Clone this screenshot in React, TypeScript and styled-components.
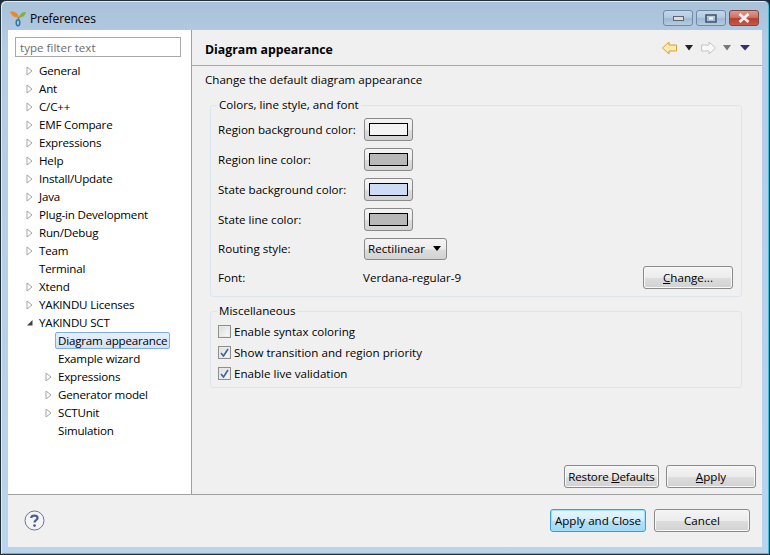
import React, { FC } from "react";
import styled, { createGlobalStyle } from "styled-components";

const GlobalStyle = createGlobalStyle`
  html, body { margin: 0; padding: 0; background: #1d2a38; }
  body { font-family: "Open Sans", "Noto Sans", sans-serif; font-size: 11.6px; color: #000; }
`;

const Win = styled.div`
  width: 770px;
  height: 555px;
  box-sizing: border-box;
  border: 1px solid #22303c;
  border-radius: 6px 6px 0 0;
  background: linear-gradient(180deg, #a8c0d8 0%, #b4cde4 8%, #bad4ec 100%);
  box-shadow: inset 1px 1px 0 #dcebf7, inset -1px -1px 0 #35c4e6;
  display: flex;
  flex-direction: column;
  overflow: hidden;
`;

const TitleBar = styled.div`
  height: 29px;
  flex: none;
  display: flex;
  align-items: center;
  padding: 5px 10px 0 9px;
  box-sizing: border-box;
`;

const TitleText = styled.span`
  margin-left: 3px;
  flex: 1;
  font-size: 12px;
  letter-spacing: -0.1px;
`;

const WinControls = styled.div`
  display: flex;
  gap: 3px;
`;

const WinBtn = styled.div<{ $close?: boolean }>`
  width: 30px;
  height: 16px;
  box-sizing: border-box;
  border: 1px solid ${(p) => (p.$close ? "#7c4a46" : "#6f8aa6")};
  border-radius: 3px;
  display: flex;
  align-items: center;
  justify-content: center;
  background: ${(p) =>
    p.$close
      ? "linear-gradient(180deg,#dc9a8f 0%,#cf7365 45%,#b93e2f 55%,#c9584a 100%)"
      : "linear-gradient(180deg,#c4d7e8 0%,#b4cbe0 45%,#9fb9d2 55%,#b4cde2 100%)"};
`;

const Client = styled.div`
  flex: 1;
  margin: 0 7px 7px 7px;
  display: flex;
  flex-direction: column;
  background: #f0f0f0;
  min-height: 0;
`;

const Main = styled.div`
  flex: 1;
  display: flex;
  min-height: 0;
  border-bottom: 1px solid #a0a0a0;
`;

const Side = styled.aside`
  flex: none;
  width: 166px;
  background: #fff;
  border-right: 1px solid #a0a0a0;
  padding: 7px 10px 0 7px;
`;

const Filter = styled.input`
  display: block;
  width: 166px;
  height: 20px;
  box-sizing: border-box;
  border: 1px solid #a9a9a9;
  padding: 0 4px;
  margin: 0 0 4px 0;
  font: inherit;
  outline: none;
  &::placeholder { color: #6d6d6d; opacity: 1; }
`;

const Tree = styled.ul`
  list-style: none;
  margin: 0;
  padding: 0;
  letter-spacing: -0.2px;
`;

const Row = styled.li<{ $depth: number }>`
  height: 18px;
  display: flex;
  align-items: center;
  padding-left: ${(p) => 13 + p.$depth * 19}px;
  white-space: nowrap;
`;

const Arrow = styled.svg`
  width: 7px;
  height: 10px;
  flex: none;
  margin-left: -2px;
  margin-right: 6px;
  margin-top: 2px;
`;

const NoArrow = styled.span`
  width: 7px;
  flex: none;
  margin-left: -2px;
  margin-right: 6px;
`;

const Label = styled.span<{ $sel?: boolean }>`
  ${(p) =>
    p.$sel
      ? `margin: 0 0 0 -3px; padding: 0 2px; height: 17px; line-height: 15px; box-sizing: border-box;
         border: 1px solid #84acdd; border-radius: 2px;
         background: linear-gradient(180deg,#e6f0fb,#cfe2f8);`
      : ""}
`;

const Content = styled.main`
  flex: 1;
  display: flex;
  flex-direction: column;
  min-width: 0;
`;

const PageHead = styled.header`
  height: 36px;
  flex: none;
  box-sizing: border-box;
  border-bottom: 1px solid #a8a8a8;
  display: flex;
  align-items: center;
  padding: 4px 12px 0 13px;
`;

const PageTitle = styled.h1`
  flex: 1;
  margin: 0;
  font-size: 12.3px;
  font-weight: 700;
`;

const NavIcons = styled.div`
  display: flex;
  align-items: center;
  margin-top: -3px;
`;

const Body = styled.div`
  flex: 1;
  display: flex;
  flex-direction: column;
  padding: 5px 6px 6px 13px;
`;

const Desc = styled.p`
  margin: 0 0 11px 0;
  line-height: 17px;
`;

const Group = styled.fieldset<{ $h: number }>`
  margin: 0 14px 8px 5px;
  padding: 0;
  height: ${(p) => p.$h}px;
  box-sizing: border-box;
  border: 1px solid #dbe5ef;
  border-radius: 3px;
  flex: none;
`;

const Legend = styled.legend`
  margin-left: 6px;
  padding: 0 2px;
  line-height: 12px;
  height: 12px;
`;

const FieldGrid = styled.div`
  padding: 3px 8px 0 7px;
  display: grid;
  grid-template-columns: 146px 1fr auto;
  grid-template-rows: repeat(4, 30px) 29px 29px;
  align-items: center;
`;

const FontName = styled.span`
  margin-left: -1px;
`;

const ColorButton = styled.div`
  width: 49px;
  height: 23px;
  box-sizing: border-box;
  border: 1px solid #8a8a8a;
  border-radius: 3px;
  background: linear-gradient(180deg, #f4f4f4 0%, #ececec 50%, #dcdcdc 55%, #d2d2d2 100%);
  display: flex;
  align-items: center;
  justify-content: center;
`;

const Swatch = styled.div<{ $c: string }>`
  width: 39px;
  height: 13px;
  box-sizing: border-box;
  border: 1px solid #000;
  background: ${(p) => p.$c};
`;

const Select = styled.div`
  width: 83px;
  height: 22px;
  box-sizing: border-box;
  border: 1px solid #8a8a8a;
  border-radius: 3px;
  background: linear-gradient(180deg, #f4f4f4 0%, #ececec 50%, #dcdcdc 55%, #d2d2d2 100%);
  display: flex;
  align-items: center;
  justify-content: space-between;
  padding: 0 5px 0 3px;
`;

const Caret = styled.span`
  width: 0;
  height: 0;
  border-left: 4px solid transparent;
  border-right: 4px solid transparent;
  border-top: 5px solid #000;
`;

const Button = styled.button<{ $w: number; $def?: boolean }>`
  width: ${(p) => p.$w}px;
  height: 23px;
  box-sizing: border-box;
  padding: 0;
  font: inherit;
  color: #000;
  border: 1px solid ${(p) => (p.$def ? "#3c9ed0" : "#8a8a8a")};
  border-radius: 3px;
  background: ${(p) =>
    p.$def
      ? "linear-gradient(180deg,#e9f6fd 0%,#d4eefb 50%,#b4e0f7 55%,#a4d8f5 100%)"
      : "linear-gradient(180deg,#f4f4f4 0%,#ececec 50%,#dcdcdc 55%,#d2d2d2 100%)"};
  box-shadow: inset 0 0 0 1px ${(p) => (p.$def ? "#9fe0fb" : "#f8f8f8")};
`;

const Checks = styled.div`
  padding: 4px 7px 0;
  display: flex;
  flex-direction: column;
`;

const CheckRow = styled.label`
  height: 21px;
  display: flex;
  align-items: center;
  gap: 3px;
`;

const Box = styled.span`
  width: 13px;
  height: 13px;
  flex: none;
  box-sizing: border-box;
  border: 1px solid #8e8e8e;
  background: linear-gradient(135deg, #dcdcdc, #fbfbfb);
  box-shadow: inset 0 0 0 1px #e9e9e9;
  display: flex;
  align-items: center;
  justify-content: center;
`;

const PageActions = styled.div`
  margin-top: auto;
  display: flex;
  justify-content: flex-end;
  gap: 7px;
`;

const RestoreText = styled.span`
  letter-spacing: -0.2px;
`;

const Footer = styled.footer`
  height: 52px;
  flex: none;
  box-sizing: border-box;
  display: flex;
  align-items: center;
  padding: 0 12px 2px 16px;
`;

const FooterBtns = styled.div`
  margin-left: auto;
  display: flex;
  gap: 8px;
`;

const U = styled.span`
  text-decoration: underline;
`;

const Closed = () => (
  <Arrow viewBox="0 0 7 10">
    <path d="M1 1 L6 5 L1 9 Z" fill="#fff" stroke="#a6a6a6" />
  </Arrow>
);

const Opened = () => (
  <Arrow viewBox="0 0 7 10">
    <path d="M6.5 2 V7.5 H1 Z" fill="#404040" />
  </Arrow>
);

type Item = { label: string; depth: number; kind: "closed" | "open" | "leaf"; sel?: boolean };

const items: Item[] = [
  { label: "General", depth: 0, kind: "closed" },
  { label: "Ant", depth: 0, kind: "closed" },
  { label: "C/C++", depth: 0, kind: "closed" },
  { label: "EMF Compare", depth: 0, kind: "closed" },
  { label: "Expressions", depth: 0, kind: "closed" },
  { label: "Help", depth: 0, kind: "closed" },
  { label: "Install/Update", depth: 0, kind: "closed" },
  { label: "Java", depth: 0, kind: "closed" },
  { label: "Plug-in Development", depth: 0, kind: "closed" },
  { label: "Run/Debug", depth: 0, kind: "closed" },
  { label: "Team", depth: 0, kind: "closed" },
  { label: "Terminal", depth: 0, kind: "leaf" },
  { label: "Xtend", depth: 0, kind: "closed" },
  { label: "YAKINDU Licenses", depth: 0, kind: "closed" },
  { label: "YAKINDU SCT", depth: 0, kind: "open" },
  { label: "Diagram appearance", depth: 1, kind: "leaf", sel: true },
  { label: "Example wizard", depth: 1, kind: "leaf" },
  { label: "Expressions", depth: 1, kind: "closed" },
  { label: "Generator model", depth: 1, kind: "closed" },
  { label: "SCTUnit", depth: 1, kind: "closed" },
  { label: "Simulation", depth: 1, kind: "leaf" },
];

const Logo = () => (
  <svg width="17" height="17" viewBox="0 0 17 17">
    <path d="M0 2 C4 0.5 8 3 9 7.5 C5 8 2 6 0 2 Z" fill="#e88a2a" />
    <path d="M16 2 C13 1.5 9.5 3.5 9 7.5 C12 8 15 6 16 2 Z" fill="#84b040" />
    <path d="M8.6 7 V10" stroke="#6a8a7a" strokeWidth="1.4" />
    <ellipse cx="8" cy="12.8" rx="1.8" ry="3" fill="none" stroke="#2d78a8" strokeWidth="1.5" />
  </svg>
);

const NavArrow: FC<{ dir: "l" | "r"; on: boolean; left: number }> = ({ dir, on, left }) => (
  <svg width="15" height="14" viewBox="0 0 15 14" style={{ marginLeft: left }}>
    <path
      d={dir === "l" ? "M7 1 L0.5 7 L7 13 V10 H14.5 V4 H7 Z" : "M8 1 L14.5 7 L8 13 V10 H0.5 V4 H8 Z"}
      fill={on ? "#ffeab0" : "#f8f8f8"}
      stroke={on ? "#d9a032" : "#c4c4c4"}
      strokeLinejoin="round"
    />
  </svg>
);

const NavCaret: FC<{ color: string; left: number; w: number }> = ({ color, left, w }) => (
  <svg width={w} height="6" viewBox={`0 0 ${w} 6`} style={{ marginLeft: left }}>
    <path d={`M0 0 H${w} L${w / 2} 5.5 Z`} fill={color} />
  </svg>
);

const Check = () => (
  <svg width="9" height="9" viewBox="0 0 9 9">
    <path d="M1 5 L3.5 8 L8 1" fill="none" stroke="#3f5fa8" strokeWidth="1.6" />
  </svg>
);

const Help = () => (
  <svg width="21" height="21" viewBox="0 0 21 21">
    <circle cx="10.5" cy="10.5" r="9.5" fill="#f4f4f6" stroke="#64799c" strokeWidth="1" />
    <path d="M7.2 8 C7.4 4.8 13.6 4.8 13.6 8 C13.6 10.2 10.5 10.2 10.5 12.6" fill="none" stroke="#4a5f88" strokeWidth="2.2" />
    <circle cx="10.5" cy="15.6" r="1.4" fill="#4a5f88" />
  </svg>
);

const App: FC = () => (
  <>
    <GlobalStyle />
    <Win>
      <TitleBar>
        <Logo />
        <TitleText>Preferences</TitleText>
        <WinControls>
          <WinBtn>
            <svg width="11" height="5" viewBox="0 0 11 5">
              <rect x="0.5" y="0.5" width="10" height="4" fill="#d8dde2" stroke="#5c6670" />
            </svg>
          </WinBtn>
          <WinBtn>
            <svg width="12" height="9" viewBox="0 0 12 9">
              <rect x="1" y="1" width="10" height="7" fill="none" stroke="#44586c" strokeWidth="1.6" />
              <rect x="4" y="3.5" width="4" height="2" fill="#fff" />
            </svg>
          </WinBtn>
          <WinBtn $close>
            <svg width="14" height="10" viewBox="0 0 14 10">
              <path d="M2.5 1 L11.5 9 M11.5 1 L2.5 9" stroke="#f4eeee" strokeWidth="2.8" />
            </svg>
          </WinBtn>
        </WinControls>
      </TitleBar>
      <Client>
        <Main>
          <Side>
            <Filter placeholder="type filter text" readOnly />
            <Tree>
              {items.map((it, i) => (
                <Row key={i} $depth={it.depth}>
                  {it.kind === "closed" && <Closed />}
                  {it.kind === "open" && <Opened />}
                  {it.kind === "leaf" && <NoArrow />}
                  <Label $sel={it.sel}>{it.label}</Label>
                </Row>
              ))}
            </Tree>
          </Side>
          <Content>
            <PageHead>
              <PageTitle>Diagram appearance</PageTitle>
              <NavIcons>
                <NavArrow dir="l" on left={0} />
                <NavCaret color="#222" left={8} w={8} />
                <NavArrow dir="r" on={false} left={8} />
                <NavCaret color="#777" left={7} w={8} />
                <NavCaret color="#3a2a78" left={9} w={10} />
              </NavIcons>
            </PageHead>
            <Body>
              <Desc>Change the default diagram appearance</Desc>
              <Group $h={198}>
                <Legend>Colors, line style, and font</Legend>
                <FieldGrid>
                  <span>Region background color:</span>
                  <ColorButton><Swatch $c="#f4f4f4" /></ColorButton>
                  <span />
                  <span>Region line color:</span>
                  <ColorButton><Swatch $c="#b8b8b8" /></ColorButton>
                  <span />
                  <span>State background color:</span>
                  <ColorButton><Swatch $c="#cddcf4" /></ColorButton>
                  <span />
                  <span>State line color:</span>
                  <ColorButton><Swatch $c="#b8b8b8" /></ColorButton>
                  <span />
                  <span>Routing style:</span>
                  <Select>Rectilinear<Caret /></Select>
                  <span />
                  <span>Font:</span>
                  <FontName>Verdana-regular-9</FontName>
                  <Button $w={90}><U>C</U>hange...</Button>
                </FieldGrid>
              </Group>
              <Group $h={83}>
                <Legend>Miscellaneous</Legend>
                <Checks>
                  <CheckRow><Box />Enable syntax coloring</CheckRow>
                  <CheckRow><Box><Check /></Box>Show transition and region priority</CheckRow>
                  <CheckRow><Box><Check /></Box>Enable live validation</CheckRow>
                </Checks>
              </Group>
              <PageActions>
                <Button $w={95}><RestoreText>Restore <U>D</U>efaults</RestoreText></Button>
                <Button $w={90}><U>A</U>pply</Button>
              </PageActions>
            </Body>
          </Content>
        </Main>
        <Footer>
          <Help />
          <FooterBtns>
            <Button $w={96} $def>Apply and Close</Button>
            <Button $w={96}>Cancel</Button>
          </FooterBtns>
        </Footer>
      </Client>
    </Win>
  </>
);

export default App;
